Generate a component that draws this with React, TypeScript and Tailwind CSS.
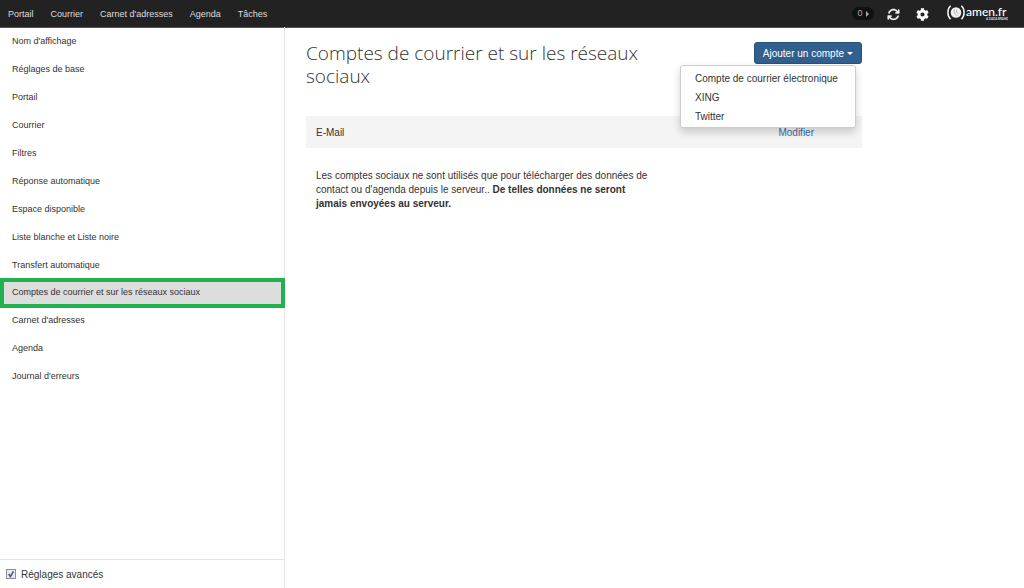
import { useState } from "react";
import { FaCog } from "react-icons/fa";
import { FaArrowsRotate } from "react-icons/fa6";

const NAV = ["Portail", "Courrier", "Carnet d'adresses", "Agenda", "Tâches"];

const SECTIONS = [
  "Nom d'affichage",
  "Réglages de base",
  "Portail",
  "Courrier",
  "Filtres",
  "Réponse automatique",
  "Espace disponible",
  "Liste blanche et Liste noire",
  "Transfert automatique",
  "Comptes de courrier et sur les réseaux sociaux",
  "Carnet d'adresses",
  "Agenda",
  "Journal d'erreurs",
];

const ACCOUNT_TYPES = ["Compte de courrier électronique", "XING", "Twitter"];

function Logo() {
  return (
    <svg viewBox="0 0 62 18" className="h-[18px] w-[62px]" role="img" aria-label="amen.fr">
      <circle cx="10" cy="7.500" r="5.300" fill="#f0f0f0" />
      <path d="M8.400 4.400c-.9 2.300.2 5.200 3 6.200M10.500 4.500v2.600l1.800 1.400" fill="none" stroke="#aaa" strokeWidth=".8" />
      <path d="M4.600.8c-3.600 3.400-3.600 10 0 13.400M15.400.8c3.600 3.400 3.600 10 0 13.400" fill="none" stroke="#f4f4f4" strokeWidth="1.500" />
      <text x="20" y="11" fill="#fff" fontFamily="Lato, sans-serif" fontWeight="500" fontSize="12">amen.fr</text>
      <text x="40" y="15" fill="#ddd" fontFamily="Lato, sans-serif" fontWeight="700" fontSize="3">A DADA BRAND</text>
    </svg>
  );
}

function TopBar() {
  return (
    <header className="flex h-[27px] shrink-0 items-center justify-between bg-[#222] pr-4 pl-2 text-[#ddd] shadow-[0_1px_0_#555]">
      <nav className="flex gap-[17px] pt-[2px]">
        {NAV.map((item) => (
          <a key={item} href="#" className="hover:text-white">
            {item}
          </a>
        ))}
      </nav>
      <div className="flex items-center">
        <button className="mr-[13px] flex h-[13px] w-[22px] items-center justify-center gap-[3px] rounded-full bg-[#111] text-[#aaa]">
          0
          <svg viewBox="0 0 3 6" className="h-[6px] w-[3px]" aria-hidden="true">
            <path d="M0 0l3 3-3 3z" fill="#aaa" />
          </svg>
        </button>
        <button aria-label="Actualiser" className="mr-4 pt-[2px] text-[13px] text-[#eee]">
          <FaArrowsRotate />
        </button>
        <button aria-label="Réglages" className="mr-[17px] pt-[2px] text-[13px] text-white">
          <FaCog />
        </button>
        <a href="#">
          <Logo />
        </a>
      </div>
    </header>
  );
}

function Sidebar() {
  const [selected, setSelected] = useState(9);
  const [advanced, setAdvanced] = useState(true);
  return (
    <aside className="flex w-[285px] shrink-0 flex-col">
      <ul className="grow border-r border-[#e5e5e5]">
        {SECTIONS.map((section, i) => (
          <li key={section} className="h-7">
            <button
              onClick={() => setSelected(i)}
              className={
                i === selected
                  ? "relative -my-px flex h-[30px] w-[285px] items-center border-4 border-[#22b14c] bg-[#ddd] pl-2 text-left"
                  : "flex h-7 w-full items-center pt-[2px] pl-3 text-left"
              }
            >
              {section}
            </button>
          </li>
        ))}
      </ul>
      <div className="flex h-[29px] items-center border-t border-r border-[#e5e5e5] pl-[6px]">
        <label className="flex items-center gap-[5px] text-[10px]">
          <span className="grid">
            <input
              type="checkbox"
              checked={advanced}
              onChange={(e) => setAdvanced(e.target.checked)}
              className="peer col-start-1 row-start-1 size-[10px] appearance-none border border-[#8e8f8f] bg-[#e6e8ea]"
            />
            <svg
              viewBox="0 0 10 10"
              className="pointer-events-none invisible col-start-1 row-start-1 size-[10px] peer-checked:visible"
              aria-hidden="true"
            >
              <path d="M2.700 5l1.700 2.500L7.500 2.300" fill="none" stroke="#41549c" strokeWidth="1.500" />
            </svg>
          </span>
          Réglages avancés
        </label>
      </div>
    </aside>
  );
}

function AddAccount() {
  const [open, setOpen] = useState(true);
  return (
    <div className="relative shrink-0">
      <button
        aria-expanded={open}
        onClick={() => setOpen(!open)}
        className="flex h-[22px] items-center gap-[3px] rounded-[3px] border border-[#285278] bg-[#315f8e] px-2 text-white"
      >
        Ajouter un compte
        <svg viewBox="0 0 6 3" className="h-[3px] w-[6px]" aria-hidden="true">
          <path d="M0 0h6L3 3z" fill="#fff" />
        </svg>
      </button>
      {open && (
        <ul className="absolute top-full right-[6px] mt-px w-44 rounded-[3px] border border-[#ccc] bg-white pt-[3px] pb-px shadow-[0_4px_9px_rgba(0,0,0,0.18)]">
          {ACCOUNT_TYPES.map((type) => (
            <li key={type}>
              <button className="block h-[19px] w-full pl-[14px] text-left whitespace-nowrap">{type}</button>
            </li>
          ))}
        </ul>
      )}
    </div>
  );
}

export default function App() {
  return (
    <div className="flex min-h-screen flex-col bg-white font-['Liberation_Sans',Arial,sans-serif] text-[9px] text-[#333]">
      <TopBar />
      <div className="flex grow">
        <Sidebar />
        <main className="grow px-[21px] pt-[15px] text-[10px]">
          <div className="max-w-[556px]">
            <div className="flex items-start justify-between">
              <h1 className="max-w-[350px] font-['Open_Sans',sans-serif] text-[19px] leading-[23px] font-light text-[#333]">
                Comptes de courrier et sur les réseaux sociaux
              </h1>
              <AddAccount />
            </div>
            <div className="mt-7 flex h-8 items-center justify-between bg-[#f4f4f4] pr-12 pl-[10px]">
              <span>E-Mail</span>
              <a href="#" className="text-[#3a6ea5]">
                Modifier
              </a>
            </div>
            <p className="mt-[21px] ml-[10px] max-w-[340px] leading-[14px]">
              Les comptes sociaux ne sont utilisés que pour télécharger des données de contact ou d'agenda depuis le
              serveur.. <b>De telles données ne seront jamais envoyées au serveur.</b>
            </p>
          </div>
        </main>
      </div>
    </div>
  );
}
